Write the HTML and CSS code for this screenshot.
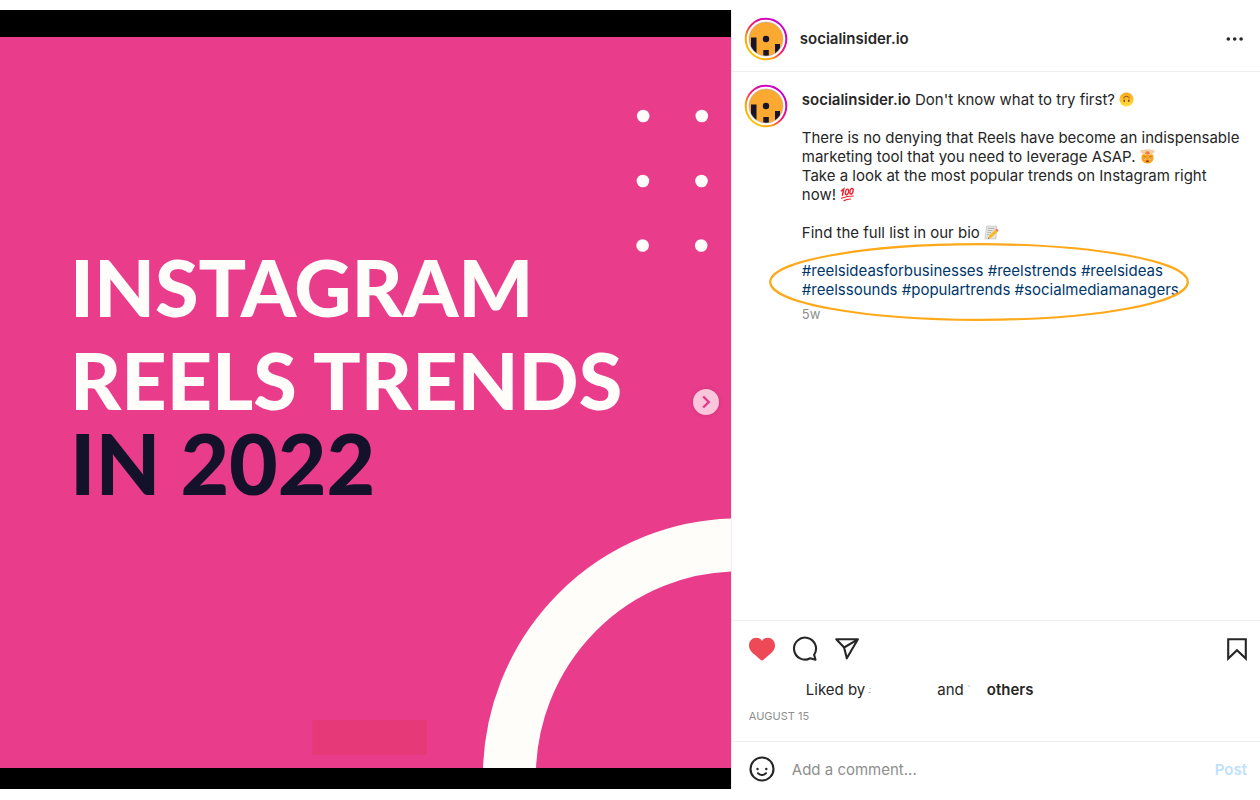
FILE: index.html
```html
<!DOCTYPE html>
<html lang="en">
<head>
<meta charset="utf-8">
<meta name="viewport" content="width=device-width, initial-scale=1">
<title>socialinsider.io post</title>
<link rel="stylesheet" href="styles.css">
</head>
<body>
<svg class="defs" aria-hidden="true">
  <defs>
    <linearGradient id="story" x1="0.15" y1="0.9" x2="0.85" y2="0.1">
      <stop offset="0" stop-color="#fcc400"/>
      <stop offset="0.25" stop-color="#ff9a0c"/>
      <stop offset="0.5" stop-color="#fb1a66"/>
      <stop offset="0.75" stop-color="#d808ae"/>
      <stop offset="1" stop-color="#c800d0"/>
    </linearGradient>
    <linearGradient id="face" x1="0" y1="0" x2="0" y2="1">
      <stop offset="0" stop-color="#f9a51b"/>
      <stop offset="1" stop-color="#ffe03b"/>
    </linearGradient>
    <clipPath id="disc"><circle cx="22" cy="22" r="17"/></clipPath>
    <symbol id="avatar" viewBox="0 0 44 44">
      <circle cx="22" cy="22" r="20.3" fill="#fff" stroke="url(#story)" stroke-width="2"/>
      <circle cx="22" cy="22" r="17" fill="#fba931"/>
      <g clip-path="url(#disc)" fill="#17132b">
        <rect x="7" y="20.5" width="5.5" height="18"/>
        <rect x="19.3" y="33" width="5.5" height="8"/>
        <rect x="31" y="27" width="5" height="12"/>
      </g>
      <circle cx="22" cy="22" r="3.2" fill="#17132b"/>
      <circle cx="22" cy="22" r="17" fill="none" stroke="#b9ab98" stroke-width="0.6"/>
    </symbol>
  </defs>
</svg>
<main class="post">
  <section class="media" aria-label="Post image">
    <div class="art">
      <svg class="shapes" viewBox="0 0 731 731" aria-hidden="true">
        <g fill="#fefdf9">
          <circle cx="643.4" cy="79" r="6.3"/><circle cx="702" cy="79" r="6.3"/>
          <circle cx="643.1" cy="144" r="6.3"/><circle cx="701.7" cy="144" r="6.3"/>
          <circle cx="642.8" cy="208.6" r="6.3"/><circle cx="701.4" cy="208.6" r="6.3"/>
        </g>
        <ellipse cx="739" cy="740" rx="229.5" ry="232" fill="none" stroke="#fefdf9" stroke-width="53"/>
        <rect x="312.5" y="683" width="114.5" height="35" fill="#e63a78"/>
      </svg>
      <h1 class="title">
        <span>INSTAGRAM</span>
        <span>REELS TRENDS</span>
        <span class="year">IN 2022</span>
      </h1>
      <button class="next" aria-label="Next">
        <svg viewBox="0 0 26 26" width="26" height="26" aria-hidden="true"><path d="M10.2 7.5 15.7 13l-5.5 5.5" fill="none" stroke="#e0398a" stroke-width="2.4"/></svg>
      </button>
    </div>
  </section>
  <section class="panel">
    <header class="head">
      <svg class="avatar" aria-hidden="true"><use href="#avatar"/></svg>
      <a class="user" href="#profile">socialinsider.io</a>
      <button class="icon more" aria-label="More options">
        <svg viewBox="0 0 18 6" width="18" height="6" fill="#262626" aria-hidden="true"><circle cx="2.300" cy="3" r="1.800"/><circle cx="8.700" cy="3" r="1.800"/><circle cx="15.100" cy="3" r="1.800"/></svg>
      </button>
    </header>
    <article class="caption">
      <svg class="avatar" aria-hidden="true"><use href="#avatar"/></svg>
      <div class="copy">
        <p><a class="user" href="#profile">socialinsider.io</a> Don't know what to try first?
          <svg class="emoji" viewBox="0 0 15 15" role="img" aria-label="Upside-down face"><circle cx="7.5" cy="7.5" r="7" fill="url(#face)"/><path d="M4.2 6.2Q7.5 2.6 10.8 6.2" fill="none" stroke="#8b4d12" stroke-width="1"/><ellipse cx="5.2" cy="8.8" rx=".8" ry="1.2" fill="#7a4210"/><ellipse cx="9.8" cy="8.8" rx=".8" ry="1.2" fill="#7a4210"/></svg></p>
        <p>There is no denying that Reels have become an indispensable<br>marketing tool that you need to leverage ASAP.
          <svg class="emoji" viewBox="0 0 15 15" role="img" aria-label="Exploding head"><path d="M1.600 6 4 5l1.500 1L7.500 4.800l2 1.200 1.500-1 2.400 1q1.200 8.600-5.900 8.600T1.600 6z" fill="#fba51c"/><path d="M3.500 5.200 1.300 4Q-.6 2.600.8 1.500 2 .4 3.500 1 5 .1 7.500.4q2.600-.3 4 .6 2.100-.5 2.900.9.600 1.500-1 2.100l-2 1.200-4 .3z" fill="#f2cfa6"/><path d="M5 5.300 6 2.500h3l1 2.800z" fill="#ef7b35"/><path d="m3.600 7.600 2.200.7M11.400 7.600l-2.200.7" stroke="#8b4012" stroke-width=".8"/><circle cx="4.900" cy="9.500" r=".9" fill="#fff"/><circle cx="10.100" cy="9.500" r=".9" fill="#fff"/><circle cx="4.900" cy="9.500" r=".5" fill="#6d3010"/><circle cx="10.100" cy="9.500" r=".5" fill="#6d3010"/><ellipse cx="7.500" cy="12.200" rx="1.500" ry="1" fill="#8b3712"/></svg><br>Take a look at the most popular trends on Instagram right<br>now!
          <svg class="emoji" viewBox="0 0 15 15" role="img" aria-label="Hundred points" fill="none" stroke="#e8232e" stroke-linecap="round"><path d="M1.400 3.800 3.700 2 2.400 8.300" stroke-width="1.500"/><ellipse cx="7" cy="5" rx="1.500" ry="2.900" transform="rotate(14 7 5)" stroke-width="1.400"/><ellipse cx="11.500" cy="4.200" rx="1.500" ry="2.900" transform="rotate(14 11.500 4.200)" stroke-width="1.400"/><path d="M1.500 11.200Q7 9 13.200 9M4 13.600q3-1.300 6.500-1.600" stroke-width="1.200"/></svg></p>
        <p>Find the full list in our bio
          <svg class="emoji" viewBox="0 0 15 15" role="img" aria-label="Memo"><path d="M2.500 1h10.300l-.8 13H.8z" fill="#e2e2df" stroke="#bcbcb8" stroke-width=".5"/><path d="M4 3.500h6.500M3.800 5.500h4.500M3.500 7.500h3.500M3.200 9.500h2" stroke="#a8a8a8" stroke-width=".7"/><path d="m5 10.800 6.500-6.200 2.100 2.100L7 12.800l-2.900.9z" fill="#f8b91d"/><path d="m11.500 4.600 1.100-1 2 2-1 1.100z" fill="#ed6a5e"/><path d="m4.500 12.500-.4 1.200 1.300-.4z" fill="#333"/></svg></p>
        <p class="tags">
          <a href="#1">#reelsideasforbusinesses</a> <a href="#2">#reelstrends</a> <a href="#3">#reelsideas</a><br>
          <a href="#4">#reelssounds</a> <a href="#5">#populartrends</a> <a href="#6">#socialmediamanagers</a>
          <svg class="ring" viewBox="0 0 420 78" preserveAspectRatio="none" aria-hidden="true"><ellipse cx="210" cy="39" rx="208.800" ry="37.800" fill="none" stroke="#ffa91a" stroke-width="2.200"/></svg>
        </p>
        <time class="age">5w</time>
      </div>
    </article>
    <div class="actions">
      <button class="icon" aria-label="Unlike"><svg viewBox="0 0 26 24" width="26" height="24" aria-hidden="true"><path d="M18.700.8C16.100.8 14.200 2 13 4 11.800 2 9.900.8 7.300.8 3.200.8 0 4.100 0 8.400c0 4.100 2.700 6.600 5.500 9.100 2 1.800 4.300 3.700 5.800 5.100.6.600 1.100 1 1.700 1s1.100-.4 1.700-1c1.500-1.400 3.800-3.300 5.800-5.100 2.800-2.500 5.500-5 5.500-9.100 0-4.300-3.200-7.600-7.300-7.600z" fill="#ed4956"/></svg></button>
      <button class="icon" aria-label="Comment"><svg viewBox="0 0 26 26" width="26" height="26" aria-hidden="true"><path d="M22.100 18.800A11 11 0 1 0 18.200 22.300L23.500 23.700z" fill="none" stroke="#262626" stroke-width="2.100" stroke-linejoin="round"/></svg></button>
      <button class="icon" aria-label="Share"><svg viewBox="0 0 26 24" width="26" height="24" aria-hidden="true"><path d="M1.300 2.300h21.600L11.800 21.300 9.100 10.500zM9.100 10.500 22.900 2.300" fill="none" stroke="#262626" stroke-width="2.100" stroke-linejoin="round"/></svg></button>
      <button class="icon save" aria-label="Save"><svg viewBox="0 0 22 24" width="22" height="24" aria-hidden="true"><path d="M2.200 2.200h17.600v19.400L11 13.200l-8.800 8.400z" fill="none" stroke="#262626" stroke-width="2.100" stroke-linejoin="miter"/></svg></button>
    </div>
    <div class="likes">
      <span>Liked by</span>
      <svg class="trace" viewBox="0 0 4 10" width="4" height="10" aria-hidden="true"><path d="M1.500 4.500h1M.8 8.500h1.700" stroke="#a5a5a5"/></svg>
      <span class="and">and</span>
      <svg class="trace" viewBox="0 0 4 10" width="4" height="10" aria-hidden="true"><path d="M2 1v2" stroke="#bdbdbd"/></svg>
      <b class="others">others</b>
    </div>
    <time class="date">AUGUST 15</time>
    <form class="compose">
      <button type="button" class="icon" aria-label="Emoji"><svg viewBox="0 0 26 26" width="26" height="26" aria-hidden="true"><circle cx="13" cy="13" r="11.500" fill="none" stroke="#262626" stroke-width="2.100"/><circle cx="8.500" cy="13" r="1.200" fill="#262626"/><circle cx="17.300" cy="13" r="1.200" fill="#262626"/><path d="M9 17.200q4 3.600 8 0" fill="none" stroke="#262626" stroke-width="2" stroke-linecap="round"/></svg></button>
      <input class="field" type="text" aria-label="Add a comment" placeholder="Add a comment...">
      <button type="button" class="send">Post</button>
    </form>
  </section>
</main>
</body>
</html>
```
FILE: styles.css
```css
* {
  box-sizing: border-box;
}

body {
  margin: 0;
  padding: 10px 0;
  background: #fff;
  color: #262626;
  font: 15px/19px Inter, "Liberation Sans", sans-serif;
}

p,
h1 {
  margin: 0;
}

a {
  color: inherit;
  text-decoration: none;
}

button,
input {
  border: 0;
  padding: 0;
  background: none;
  font: inherit;
}

button {
  cursor: pointer;
}

.defs {
  position: absolute;
  width: 0;
  height: 0;
}

.post {
  display: grid;
  grid-template-columns: 58fr 42fr;
}

.media {
  padding: 27px 0 21px;
  background: #000;
}

.art {
  position: relative;
  aspect-ratio: 1;
  overflow: hidden;
  padding: 203px 0 0 70px;
  background: #e93d8b;
}

.shapes {
  position: absolute;
  inset: 0;
  width: 100%;
  height: 100%;
}

.title {
  position: relative;
  display: flex;
  flex-direction: column;
  color: #fefdf9;
  font: 900 79px/93px Lato, sans-serif;
  white-space: nowrap;
}

.year {
  color: #14122b;
  font-size: 84px;
  line-height: 73px;
}

.next {
  position: absolute;
  top: calc(50% - 13px);
  right: 12px;
  width: 26px;
  height: 26px;
  border-radius: 50%;
  background: #fbc5dc;
  box-shadow: 0 0 4px #a0205060;
}

.next svg {
  display: block;
}

.panel {
  display: flex;
  flex-direction: column;
  min-width: 0;
  border-left: 1px solid #efefef;
}

.head {
  display: flex;
  align-items: center;
  gap: 12px;
  height: 62px;
  padding: 0 16px 4px 12px;
  border-bottom: 1px solid #efefef;
}

.avatar {
  flex: none;
  width: 44px;
  height: 44px;
}

.user,
.others,
.send {
  font-weight: 600;
}

.icon {
  display: flex;
}

.more {
  margin-left: auto;
}

.caption {
  display: flex;
  flex: 1;
  gap: 14px;
  padding: 12px;
}

.copy {
  display: flex;
  flex-direction: column;
  gap: 19px;
  padding-top: 6px;
}

.emoji {
  width: 15px;
  height: 15px;
  vertical-align: -2px;
}

.tags {
  position: relative;
  color: #00376b;
}

.ring {
  position: absolute;
  top: -18px;
  left: -33px;
  width: 420px;
  height: 78px;
  pointer-events: none;
}

.age {
  margin-top: -13px;
  color: #8e8e8e;
  font-size: 13px;
}

.actions {
  display: flex;
  align-items: center;
  gap: 17px;
  padding: 15px 12px 8px 17px;
  border-top: 1px solid #efefef;
}

.save {
  margin-left: auto;
}

.likes {
  display: flex;
  align-items: center;
  padding: 10px 16px 8px 74px;
}

.trace {
  margin-left: 3px;
}

.and {
  margin-left: 65px;
}

.others {
  margin-left: 16px;
}

.date {
  padding: 0 17px 15px;
  color: #8e8e8e;
  font-size: 11px;
}

.compose {
  display: flex;
  align-items: center;
  gap: 17px;
  height: 48px;
  padding: 8px 13px 0 17px;
  border-top: 1px solid #efefef;
}

.field {
  flex: 1;
  min-width: 0;
  outline: 0;
}

.field::placeholder {
  color: #8e8e8e;
  opacity: 1;
}

.send {
  color: #bfe0fd;
}
```
